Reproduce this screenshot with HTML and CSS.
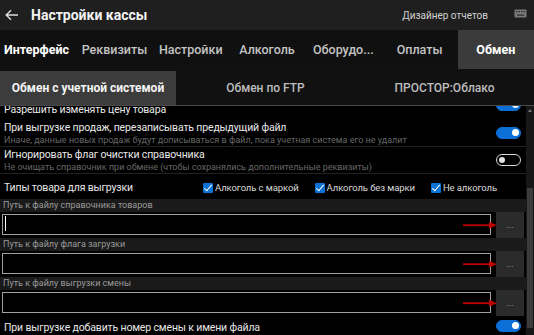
FILE: index.html
```html
<!DOCTYPE html>
<html lang="ru">
<head>
  <meta charset="UTF-8">
  <title>Настройки кассы</title>
  <link rel="stylesheet" href="styles.css">
</head>
<body>
  <div class="titlebar">
    <svg class="back" width="14" height="12" viewBox="0 0 14 12"><path d="M13 6H1.5M6 1.2L1.2 6L6 10.8" fill="none" stroke="#e0e0e0" stroke-width="1.4"/></svg>
    <span class="title">Настройки кассы</span>
    <span class="designer">Дизайнер отчетов</span>
    <svg class="kbd" width="13" height="9" viewBox="0 0 13 9"><rect x="0.5" y="0.5" width="12" height="8" rx="1" fill="#7a7a7a"/><g fill="#2a2a2a"><rect x="2" y="2" width="1.5" height="1.2"/><rect x="4.5" y="2" width="1.5" height="1.2"/><rect x="7" y="2" width="1.5" height="1.2"/><rect x="9.5" y="2" width="1.5" height="1.2"/><rect x="3" y="5.5" width="7" height="1.2"/></g></svg>
  </div>

  <div class="tabs">
    <div class="tab tab-first">Интерфейс</div>
    <div class="tab">Реквизиты</div>
    <div class="tab">Настройки</div>
    <div class="tab">Алкоголь</div>
    <div class="tab">Оборудо...</div>
    <div class="tab">Оплаты</div>
    <div class="tab active">Обмен</div>
  </div>

  <div class="subtabs">
    <div class="subtab active">Обмен с учетной системой</div>
    <div class="subtab">Обмен по FTP</div>
    <div class="subtab">ПРОСТОР:Облако</div>
  </div>

  <div class="content">
    <div class="list">
      <div class="row row-top">
        <div class="text"><div class="main">Разрешить изменять цену товара</div></div>
        <span class="toggle on"></span>
      </div>
      <div class="row sep">
        <div class="text">
          <div class="main">При выгрузке продаж, перезаписывать предыдущий файл</div>
          <div class="sub">Иначе, данные новых продаж будут дописываться в файл, пока учетная система его не удалит</div>
        </div>
        <span class="toggle on"></span>
      </div>
      <div class="row sep">
        <div class="text">
          <div class="main">Игнорировать флаг очистки справочника</div>
          <div class="sub">Не очищать справочник при обмене (чтобы сохранялись дополнительные реквизиты)</div>
        </div>
        <span class="toggle"></span>
      </div>
      <div class="row types">
        <div class="main types-label">Типы товара для выгрузки</div>
        <div class="checks">
          <label class="check"><span class="box"></span>Алкоголь с маркой</label>
          <label class="check"><span class="box"></span>Алкоголь без марки</label>
          <label class="check"><span class="box"></span>Не алкоголь</label>
        </div>
      </div>

      <div class="caption">Путь к файлу справочника товаров</div>
      <div class="field">
        <div class="input focused"></div>
        <div class="browse">...</div>
        <svg class="arrow" width="34" height="8" viewBox="0 0 34 8"><path d="M0 4.2H27" stroke="#c00000" stroke-width="1.8"/><path d="M26 0.8L34 4.2L26 7.4Z" fill="#c00000"/></svg>
      </div>

      <div class="caption">Путь к файлу флага загрузки</div>
      <div class="field">
        <div class="input"></div>
        <div class="browse">...</div>
        <svg class="arrow" width="34" height="8" viewBox="0 0 34 8"><path d="M0 4.2H27" stroke="#c00000" stroke-width="1.8"/><path d="M26 0.8L34 4.2L26 7.4Z" fill="#c00000"/></svg>
      </div>

      <div class="caption">Путь к файлу выгрузки смены</div>
      <div class="field">
        <div class="input"></div>
        <div class="browse">...</div>
        <svg class="arrow" width="34" height="8" viewBox="0 0 34 8"><path d="M0 4.2H27" stroke="#c00000" stroke-width="1.8"/><path d="M26 0.8L34 4.2L26 7.4Z" fill="#c00000"/></svg>
      </div>

      <div class="row last">
        <div class="text"><div class="main">При выгрузке добавить номер смены к имени файла</div></div>
        <span class="toggle on"></span>
      </div>
    </div>
    <div class="scrollbar">
      <span class="up"></span>
      <div class="thumb"></div>
    </div>
  </div>
</body>
</html>
```

FILE: styles.css
```css
body {
  margin: 0;
  width: 534px;
  height: 335px;
  overflow: hidden;
  background: #000;
  color: #e6e6e6;
  font-family: Roboto, "Noto Sans", Arial, sans-serif;
}

/* title bar */
.titlebar {
  height: 30px;
  background: #1f1f1f;
  display: flex;
  align-items: center;
  padding: 0 7px 0 5px;
}
.back {
  margin-right: 12px;
}
.title {
  font-size: 14px;
  font-weight: bold;
  color: #f2f2f2;
  flex-grow: 1;
}
.designer {
  font-size: 10px;
  color: #cfcfcf;
  margin-right: 26px;
}
.kbd {
  margin-top: -3px;
}

/* main tabs */
.tabs {
  display: grid;
  grid-template-columns: repeat(7, 1fr);
  height: 39px;
  background: #101010;
}
.tab {
  display: flex;
  align-items: center;
  justify-content: center;
  font-size: 12.5px;
  font-weight: 500;
  color: #c4c4c4;
  white-space: nowrap;
}
.tab-first {
  color: #fff;
  font-weight: bold;
  justify-content: flex-start;
  padding-left: 4px;
}
.tab.active {
  background: #3b3b3b;
  color: #fff;
  font-weight: bold;
}

/* sub tabs */
.subtabs {
  display: grid;
  grid-template-columns: 176px 1fr 1fr;
  height: 36px;
  background: #111;
  border-bottom: 1px solid #4a4a4a;
}
.subtab {
  display: flex;
  align-items: center;
  justify-content: center;
  font-size: 12px;
  font-weight: 500;
  color: #bdbdbd;
  margin-top: 2px;
}
.subtab.active {
  background: #3c3c3c;
  color: #f4f4f4;
  font-weight: bold;
}

/* content */
.content {
  display: flex;
  height: 229px;
  overflow: hidden;
}
.list {
  flex-grow: 1;
  margin-top: -10px;
}
.row {
  display: flex;
  align-items: center;
  justify-content: space-between;
  padding: 0 5px 0 4px;
}
.row-top {
  height: 24px;
}
.row-top .main {
  padding-top: 4px;
}
.sep {
  height: 26px;
  border-bottom: 1px solid #222;
}
.main {
  font-size: 10.5px;
  line-height: 14px;
  letter-spacing: -0.15px;
  color: #e8e8e8;
  white-space: nowrap;
}
.sub {
  font-size: 9px;
  line-height: 11px;
  color: #666;
  white-space: nowrap;
}
.types {
  height: 23px;
  padding-top: 2px;
  justify-content: flex-start;
}
.types-label {
  width: 199px;
}
.checks {
  display: flex;
}
.check {
  display: flex;
  align-items: center;
  font-size: 9.5px;
  letter-spacing: -0.1px;
  color: #dadada;
  white-space: nowrap;
  margin-right: 16px;
}
.box {
  width: 10px;
  height: 10px;
  background: #0c72d6;
  border-radius: 1px;
  margin-right: 2px;
  position: relative;
}
.box::after {
  content: "";
  position: absolute;
  left: 3px;
  top: 0;
  width: 3px;
  height: 7px;
  border: solid #fff;
  border-width: 0 1.3px 1.3px 0;
  transform: rotate(40deg);
}

/* toggles */
.toggle {
  width: 25px;
  height: 12px;
  border-radius: 6px;
  background: #000;
  border: 1.5px solid #d6d6d6;
  box-sizing: border-box;
  position: relative;
  flex-shrink: 0;
}
.toggle::after {
  content: "";
  position: absolute;
  left: 2px;
  top: 1.5px;
  width: 6px;
  height: 6px;
  border-radius: 50%;
  background: #e0e0e0;
}
.toggle.on {
  background: #0c6fd8;
  border-color: #0c6fd8;
}
.toggle.on::after {
  left: auto;
  right: 1.5px;
  top: 1px;
  width: 7px;
  height: 7px;
  background: #fff;
}
.row-top .toggle {
  margin-top: -6px;
}

/* path fields */
.caption {
  height: 13px;
  line-height: 13px;
  background: #1a1a1a;
  font-size: 9px;
  color: #9a9a9a;
  padding-left: 3px;
}
.field {
  height: 26px;
  display: flex;
  align-items: center;
  position: relative;
}
.input {
  width: 489px;
  height: 21px;
  margin-left: 2px;
  margin-top: -2px;
  border: 1.5px solid #a0a0a0;
  box-sizing: border-box;
  position: relative;
}
.input.focused::before {
  content: "";
  position: absolute;
  left: 2px;
  top: 1.5px;
  width: 1px;
  height: 15px;
  background: #fff;
}
.browse {
  width: 28px;
  height: 26px;
  margin-left: 5px;
  background: #2b2b2b;
  color: #aaa;
  font-size: 9px;
  display: flex;
  align-items: center;
  justify-content: center;
}
.arrow {
  position: absolute;
  left: 463px;
  top: 9px;
}
.last {
  height: 24px;
}
.last .toggle {
  margin-top: -4px;
}

/* scrollbar */
.scrollbar {
  width: 8px;
  background: #171717;
  display: flex;
  flex-direction: column;
  align-items: center;
}
.up {
  margin-top: 3px;
  width: 0;
  height: 0;
  border-left: 2px solid transparent;
  border-right: 2px solid transparent;
  border-bottom: 3px solid #777;
}
.thumb {
  margin-top: 76px;
  width: 6px;
  height: 140px;
  background: #3c3c3c;
}
```
